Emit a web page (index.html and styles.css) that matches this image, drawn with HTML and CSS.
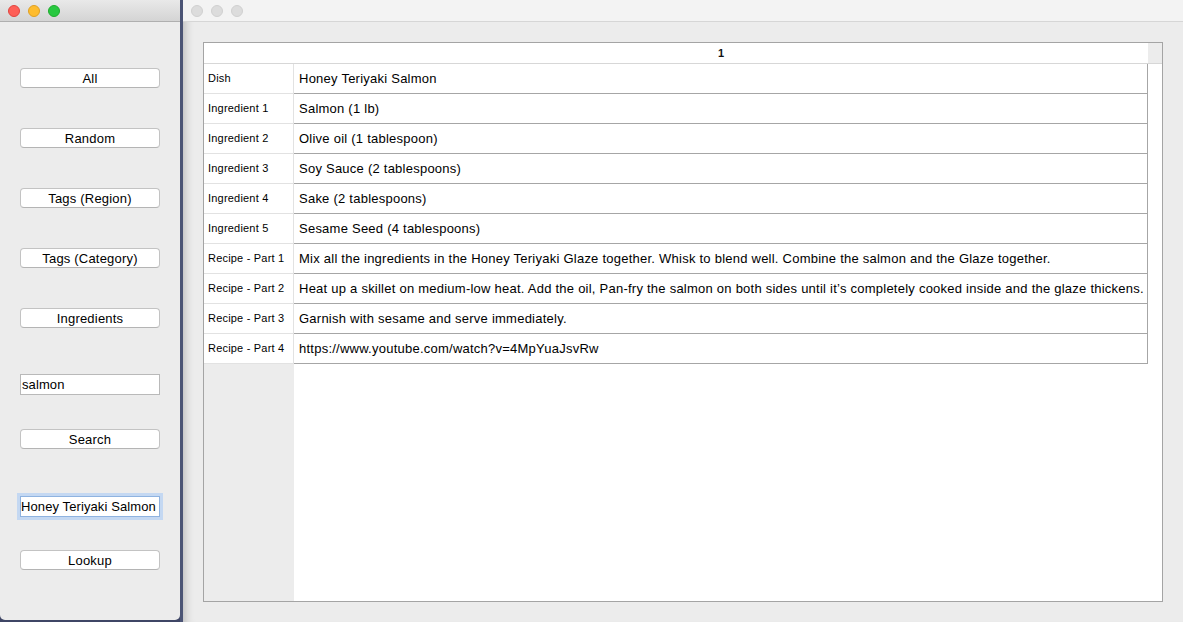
FILE: index.html
```html
<!DOCTYPE html>
<html>
<head>
<meta charset="utf-8">
<link rel="stylesheet" href="styles.css">
</head>
<body>
<div class="desk">
  <div class="win-left">
    <div class="titlebar active">
      <span class="light red"></span><span class="light yellow"></span><span class="light green"></span>
    </div>
    <div class="side">
      <div class="btn m-first">All</div>
      <div class="btn m-40">Random</div>
      <div class="btn m-40">Tags (Region)</div>
      <div class="btn m-40">Tags (Category)</div>
      <div class="btn m-40">Ingredients</div>
      <div class="field m-46">salmon</div>
      <div class="btn m-35">Search</div>
      <div class="field focus m-47">Honey Teriyaki Salmon</div>
      <div class="btn m-34">Lookup</div>
    </div>
  </div>
  <div class="divider"></div>
  <div class="win-right">
    <div class="titlebar inactive">
      <span class="light off"></span><span class="light off"></span><span class="light off"></span>
    </div>
    <div class="content">
      <div class="frame">
        <div class="hrow">
          <div class="corner"></div>
          <div class="colhead">1</div>
          <div class="hfill"></div>
        </div>
        <div class="tbody">
          <div class="vhead">
            <div class="vh">Dish</div>
            <div class="vh">Ingredient 1</div>
            <div class="vh">Ingredient 2</div>
            <div class="vh">Ingredient 3</div>
            <div class="vh">Ingredient 4</div>
            <div class="vh">Ingredient 5</div>
            <div class="vh">Recipe - Part 1</div>
            <div class="vh">Recipe - Part 2</div>
            <div class="vh">Recipe - Part 3</div>
            <div class="vh">Recipe - Part 4</div>
          </div>
          <div class="cells">
            <div class="cell">Honey Teriyaki Salmon</div>
            <div class="cell">Salmon (1 lb)</div>
            <div class="cell">Olive oil (1 tablespoon)</div>
            <div class="cell">Soy Sauce (2 tablespoons)</div>
            <div class="cell">Sake (2 tablespoons)</div>
            <div class="cell">Sesame Seed (4 tablespoons)</div>
            <div class="cell">Mix all the ingredients in the Honey Teriyaki Glaze together. Whisk to blend well. Combine the salmon and the Glaze together.</div>
            <div class="cell">Heat up a skillet on medium-low heat. Add the oil, Pan-fry the salmon on both sides until it’s completely cooked inside and the glaze thickens.</div>
            <div class="cell">Garnish with sesame and serve immediately.</div>
            <div class="cell">https://www.youtube.com/watch?v=4MpYuaJsvRw</div>
          </div>
        </div>
      </div>
    </div>
  </div>
</div>
</body>
</html>
```
FILE: styles.css
```css
* { box-sizing: border-box; }
html, body { margin: 0; padding: 0; }
body {
  width: 1183px;
  height: 622px;
  overflow: hidden;
  font-family: "Liberation Sans", Arial, sans-serif;
  color: #0a0a0a;
  background: #3f4665;
}
.desk {
  display: flex;
  height: 622px;
}
.win-left {
  width: 180px;
  height: 620px;
  background: #ececec;
  border-radius: 0 0 5px 5px;
  display: flex;
  flex-direction: column;
}
.divider {
  width: 3px;
  background: #4b5475;
}
.win-right {
  flex: 1;
  background: #ececec;
  display: flex;
  flex-direction: column;
  box-shadow: inset 10px 0 10px -8px rgba(0,0,0,0.22);
}
.titlebar {
  height: 22px;
  display: flex;
  align-items: center;
  gap: 8px;
  padding-left: 8px;
  border-bottom: 1px solid #b9b9b9;
  flex-shrink: 0;
}
.titlebar.active {
  background: linear-gradient(#e9e9e9, #d4d4d4);
  border-bottom-color: #afafaf;
}
.titlebar.inactive {
  background: #f3f3f3;
  border-bottom-color: #d6d6d6;
}
.light {
  width: 12px;
  height: 12px;
  border-radius: 50%;
  display: block;
}
.red { background: #fe5f57; border: 1px solid #e1453f; }
.yellow { background: #febc2e; border: 1px solid #dfa023; }
.green { background: #28c840; border: 1px solid #1eac2c; }
.off { background: #dcdcdc; border: 1px solid #d0d0d0; }

.side {
  display: flex;
  flex-direction: column;
  padding-left: 20px;
}
.btn {
  width: 140px;
  height: 20px;
  background: #fff;
  border: 1px solid #c3c3c3;
  border-bottom-color: #b4b4b4;
  border-radius: 4px;
  font-size: 13px;
  line-height: 17px;
  padding-top: 1px;
  text-align: center;
  letter-spacing: 0.2px;
  color: #000;
}
.field {
  width: 140px;
  height: 21px;
  background: #fff;
  border: 1px solid #b9b9b9;
  font-size: 13px;
  line-height: 19px;
  padding-left: 1px;
  letter-spacing: 0.1px;
  color: #000;
  white-space: nowrap;
  overflow: hidden;
}
.field.focus {
  border-color: #8fb3e0;
  box-shadow: 0 0 0 3px #c4d8f2;
  padding-left: 0;
}
.m-first { margin-top: 46px; }
.m-40 { margin-top: 40px; }
.m-46 { margin-top: 46px; }
.m-35 { margin-top: 34px; }
.m-47 { margin-top: 47px; }
.m-34 { margin-top: 33px; }

.content {
  flex: 1;
  padding: 20px;
}
.frame {
  width: 960px;
  height: 560px;
  border: 1px solid #a4a4a4;
  background: #fff;
  display: flex;
  flex-direction: column;
}
.hrow {
  display: flex;
  height: 21px;
  border-bottom: 1px solid #d7d7d7;
  flex-shrink: 0;
}
.corner { width: 90px; background: #fff; }
.colhead {
  width: 854px;
  background: #fff;
  font-size: 11px;
  font-weight: bold;
  text-align: center;
  line-height: 20px;
  color: #111;
}
.hfill { flex: 1; background: #ececec; }
.tbody {
  flex: 1;
  display: flex;
}
.vhead {
  width: 90px;
  background: #ececec;
  display: flex;
  flex-direction: column;
}
.vh {
  height: 30px;
  background: #fff;
  border-bottom: 1px solid #e2e2e2;
  border-right: 1px solid #e2e2e2;
  font-size: 11px;
  line-height: 29px;
  padding-left: 4px;
  letter-spacing: 0.2px;
  color: #000;
  white-space: nowrap;
}
.cells {
  width: 854px;
  display: flex;
  flex-direction: column;
}
.cell {
  height: 30px;
  border-bottom: 1px solid #a6a6a6;
  border-right: 1px solid #a6a6a6;
  font-size: 13px;
  line-height: 29px;
  padding-left: 5px;
  letter-spacing: 0.24px;
  white-space: nowrap;
  overflow: hidden;
  color: #000;
}
```
